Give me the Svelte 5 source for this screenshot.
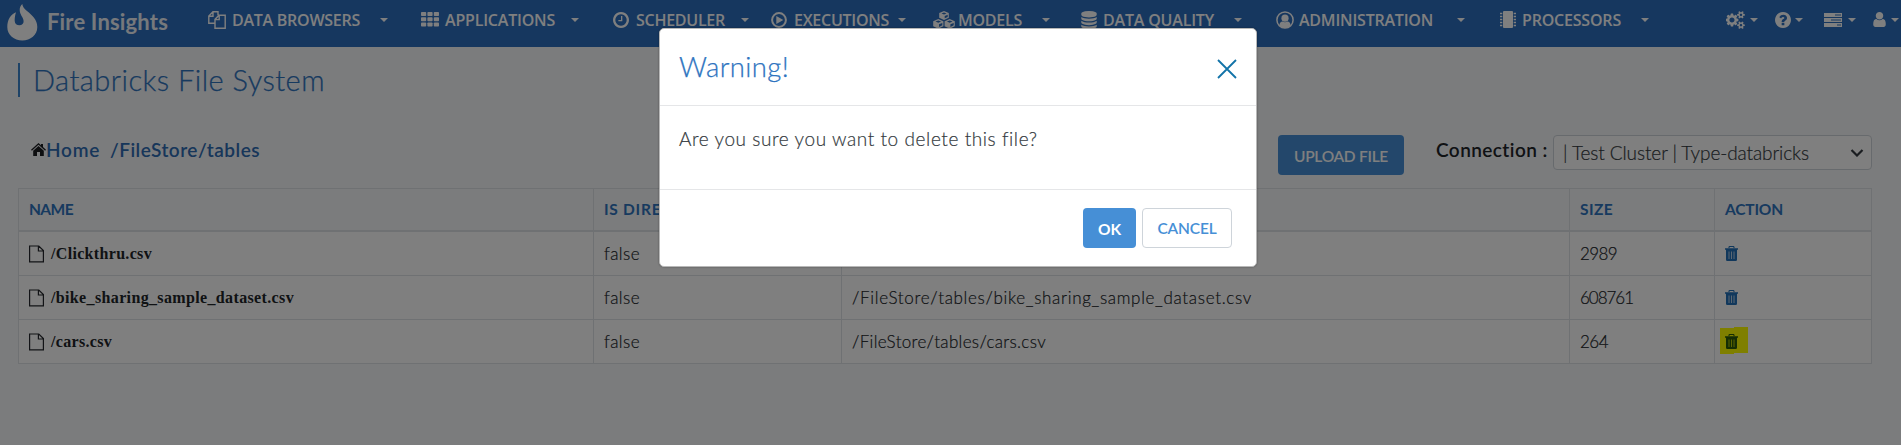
<script>
  const menus = [
    { label: 'DATA BROWSERS', icon: 'files', slot: 24, text: 128, gap: 20, w: 213 },
    { label: 'APPLICATIONS', icon: 'grid', slot: 24, text: 110, gap: 16, w: 192 },
    { label: 'SCHEDULER', icon: 'clock', slot: 23, text: 89, gap: 16, w: 158 },
    { label: 'EXECUTIONS', icon: 'play', slot: 23, text: 95, gap: 9, w: 162 },
    { label: 'MODELS', icon: 'cubes', slot: 25, text: 64, gap: 20, w: 148 },
    { label: 'DATA QUALITY', icon: 'database', slot: 22, text: 111, gap: 20, w: 195 },
    { label: 'ADMINISTRATION', icon: 'usercircle', slot: 23, text: 134, gap: 24, w: 224 },
    { label: 'PROCESSORS', icon: 'chip', slot: 22, text: 99, gap: 20, w: 226 },
    { label: '', icon: 'cogs', slot: 22, text: 0, gap: 2, w: 49 },
    { label: '', icon: 'help', slot: 19, text: 0, gap: 1, w: 49 },
    { label: '', icon: 'tasks', slot: 22, text: 0, gap: 2, w: 49 },
    { label: '', icon: 'user', slot: 17, text: 0, gap: 1, w: 28 }
  ];
  const files = [
    { name: '/Clickthru.csv', nw: 101, path: '/FileStore/tables/Clickthru.csv', pw: 250, size: '2989', sw: 37 },
    { name: '/bike_sharing_sample_dataset.csv', nw: 243, path: '/FileStore/tables/bike_sharing_sample_dataset.csv', pw: 400, size: '608761', sw: 53 },
    { name: '/cars.csv', nw: 61, path: '/FileStore/tables/cars.csv', pw: 194, size: '264', sw: 28, marked: true }
  ];
  // Spreads letters so that a label fills the given width.
  function track(node, width) {
    const natural = node.getBoundingClientRect().width;
    node.style.letterSpacing = `${(width - natural) / node.textContent.length}px`;
  }
</script>

{#snippet icon(name)}
  {#if name === 'files'}
    <svg width="18" height="18" viewBox="0 0 18 18" fill="none" stroke="currentColor" stroke-width="1.4"><path d="M6.5 12.3H.8V5L5 .8h5v3.4M.8 5.2H5V.8M7 17.2h10.2V4.2H11L7 8.4zM7 8.6h4.2V4.2"/></svg>
  {:else if name === 'grid'}
    <svg width="18" height="15" viewBox="0 0 18 15" fill="currentColor">{#each [0, 6.4, 12.8] as x}{#each [0, 5.2, 10.4] as y}<rect {x} {y} width="5.2" height="4.1" rx=".8"/>{/each}{/each}</svg>
  {:else if name === 'clock'}
    <svg width="16" height="16" viewBox="128 128 1536 1536" fill="currentColor"><path d="M1024 544v448q0 14-9 23t-23 9h-320q-14 0-23-9t-9-23v-64q0-14 9-23t23-9h224v-352q0-14 9-23t23-9h64q14 0 23 9t9 23zm416 352q0-148-73-273t-198-198-273-73-273 73-198 198-73 273 73 273 198 198 273 73 273-73 198-198 73-273zm224 0q0 209-103 385.5t-279.5 279.5-385.5 103-385.5-103-279.5-279.5-103-385.5 103-385.5 279.5-279.5 385.5-103 385.5 103 279.5 279.5 103 385.5z"/></svg>
  {:else if name === 'play'}
    <svg width="16" height="16" viewBox="0 0 16 16"><circle cx="8" cy="8" r="6.9" fill="none" stroke="currentColor" stroke-width="2"/><path d="M5.3 4v8l7-4z" fill="currentColor"/></svg>
  {:else if name === 'cubes'}
    <svg width="22" height="18" viewBox="0 0 22 18"><g fill="currentColor"><path d="M11 0l4.8 2v4.8L11 9 6.2 6.8V2z"/><path d="M5.3 8l5.1 2.2v5L5.3 17.7.2 15.2v-5z"/><path d="M16.7 8l5.1 2.2v5l-5.1 2.5-5.100-2.500v-5z"/></g><path d="M8.500 2.500l2.500 1 2.500-1-2.500-1zM11.700 7.300V5L14.700 3.700v2.200zM2.500 10.500l2.800 1.200 2.800-1.200-2.800-1.100zM6 16v-2.700l3.300-1.400v2.400zM13.900 10.500l2.800 1.200 2.800-1.200-2.800-1.100zM17.400 16v-2.700l3.300-1.400v2.400z" fill="#2c6ebe"/></svg>
  {:else if name === 'database'}
    <svg width="16" height="18" viewBox="128 0 1536 1792" fill="currentColor"><path d="M896 768q237 0 443-43t325-127v170q0 69-103 128t-280 93.500-385 34.500-385-34.500-280-93.500-103-128v-170q119 84 325 127t443 43zm0 768q237 0 443-43t325-127v170q0 69-103 128t-280 93.500-385 34.500-385-34.500-280-93.500-103-128v-170q119 84 325 127t443 43zm0-384q237 0 443-43t325-127v170q0 69-103 128t-280 93.500-385 34.500-385-34.500-280-93.500-103-128v-170q119 84 325 127t443 43zm0-1152q208 0 385 34.500t280 93.500 103 128v128q0 69-103 128t-280 93.500-385 34.500-385-34.500-280-93.500-103-128v-128q0-69 103-128t280-93.500 385-34.500z"/></svg>
  {:else if name === 'usercircle'}
    <svg width="18" height="18" viewBox="0 0 18 18"><circle cx="9" cy="9" r="8.100" fill="none" stroke="currentColor" stroke-width="1.500"/><circle cx="9" cy="7.200" r="3.600" fill="currentColor"/><path d="M3.300 14.500c.3-2.600 1.500-4.100 3.200-4.100 1.500 1.100 3.500 1.100 5 0 1.700 0 2.900 1.500 3.200 4.100A8 8 0 0 1 9 17a8 8 0 0 1-5.700-2.500z" fill="currentColor"/></svg>
  {:else if name === 'chip'}
    <svg width="16" height="17" viewBox="0 0 16 17"><rect x="3" y="0" width="10" height="17" rx="1" fill="currentColor"/><path d="M0 2.500h2.300M0 5.500h2.300M0 8.500h2.300M0 11.500h2.300M0 14.500h2.300M13.700 2.500H16M13.700 5.500H16M13.700 8.500H16M13.700 11.500H16M13.700 14.500H16" stroke="currentColor" stroke-width="1.500"/></svg>
  {:else if name === 'cogs'}
    <svg width="19" height="18" viewBox="0 0 1856 1792" fill="currentColor"><path d="M832 896q0-106-75-181t-181-75-181 75-75 181 75 181 181 75 181-75 75-181zm768 512q0-52-38-90t-90-38-90 38-38 90q0 53 37.500 90.500t90.500 37.500 90.500-37.500 37.500-90.500zm0-1024q0-52-38-90t-90-38-90 38-38 90q0 53 37.500 90.500t90.500 37.500 90.500-37.500 37.500-90.500zm-384 421v185q0 10-7 19.500t-16 10.500l-155 24q-11 35-32 76 34 48 90 115 7 11 7 20 0 12-7 19-23 30-82.500 89.500t-78.500 59.500q-11 0-21-7l-115-90q-37 19-77 31-11 108-23 155-7 24-30 24h-186q-11 0-20-7.500t-10-17.500l-23-153q-34-10-75-31l-118 89q-7 7-20 7-11 0-21-8-144-133-144-160 0-9 7-19 10-14 41-53t47-61q-23-44-35-82l-152-24q-10-1-17-9.500t-7-19.500v-185q0-10 7-19.500t16-10.500l155-24q11-35 32-76-34-48-90-115-7-11-7-20 0-12 7-20 22-30 82-89t79-59q11 0 21 7l115 90q34-18 77-32 11-108 23-154 7-24 30-24h186q11 0 20 7.500t10 17.500l23 153q34 10 75 31l118-89q8-7 20-7 11 0 21 8 144 133 144 160 0 8-7 19-12 16-42 54t-45 60q23 48 34 82l152 23q10 2 17 10.500t7 19.500zm640 533v140q0 16-149 31-12 27-30 52 51 113 51 138 0 4-4 7-122 71-124 71-8 0-46-47t-52-68q-20 2-30 2t-30-2q-14 21-52 68t-46 47q-2 0-124-71-4-3-4-7 0-25 51-138-18-25-30-52-149-15-149-31v-140q0-16 149-31 13-29 30-52-51-113-51-138 0-4 4-7 4-2 35-20t59-34 30-16q8 0 46 46.500t52 67.500q20-2 30-2t30 2q51-71 92-112l6-2q4 0 124 70 4 3 4 7 0 25-51 138 17 23 30 52 149 15 149 31zm0-1024v140q0 16-149 31-12 27-30 52 51 113 51 138 0 4-4 7-122 71-124 71-8 0-46-47t-52-68q-20 2-30 2t-30-2q-14 21-52 68t-46 47q-2 0-124-71-4-3-4-7 0-25 51-138-18-25-30-52-149-15-149-31v-140q0-16 149-31 13-29 30-52-51-113-51-138 0-4 4-7 4-2 35-20t59-34 30-16q8 0 46 46.500t52 67.500q20-2 30-2t30 2q51-71 92-112l6-2q4 0 124 70 4 3 4 7 0 25-51 138 17 23 30 52 149 15 149 31z"/></svg>
  {:else if name === 'help'}
    <svg width="16" height="16" viewBox="128 128 1536 1536" fill="currentColor"><path d="M1024 1376v-192q0-14-9-23t-23-9h-192q-14 0-23 9t-9 23v192q0 14 9 23t23 9h192q14 0 23-9t9-23zm256-672q0-88-55.500-163t-138.500-116-170-41q-243 0-371 213-15 24 8 42l132 100q7 6 19 6 16 0 25-12 53-68 86-92 34-24 86-24 48 0 85.500 26t37.500 59q0 38-20 61t-68 45q-63 28-115.500 86.500t-52.500 125.500v36q0 14 9 23t23 9h192q14 0 23-9t9-23q0-19 21.500-49.500t54.500-49.500q32-18 49-28.500t46-35 44.500-48 28-60.500 12.500-81zm384 192q0 209-103 385.500t-279.500 279.500-385.500 103-385.500-103-279.500-279.500-103-385.500 103-385.500 279.500-279.500 385.500-103 385.500 103 279.500 279.500 103 385.500z"/></svg>
  {:else if name === 'tasks'}
    <svg width="18" height="14" viewBox="0 0 18 14"><path d="M0 0h18v4H0zM0 5h18v4H0zM0 10h18v4H0z" fill="currentColor"/><path d="M11 1.500h6v1h-6zM7 6.500h10v1H7zM13 11.500h4v1h-4z" fill="#2c6ebe"/></svg>
  {:else if name === 'user'}
    <svg width="13" height="15" viewBox="256 128 1280 1536" fill="currentColor"><path d="M1536 1399q0 109-62.500 187t-150.500 78h-854q-88 0-150.500-78t-62.500-187q0-85 8.500-160.500t31.500-152 58.500-131 94-89 134.500-34.500q131 128 313 128t313-128q76 0 134.500 34.500t94 89 58.500 131 31.500 152 8.500 160.500zm-256-887q0 159-112.500 271.500t-271.500 112.500-271.500-112.500-112.500-271.500 112.500-271.500 271.500-112.500 271.500 112.500 112.500 271.500z"/></svg>
  {/if}
{/snippet}

<div class="page">
  <header>
    <div class="brand">
      <svg width="31" height="37" viewBox="0 0 31 37"><path d="M15.300 0C15.500 2.500 17 4.500 20 7c5 4.300 10.300 8.500 10.300 16C30.300 31 23.500 36.500 15.300 36.500S.3 31 .3 23C.3 16 3.500 10.500 9 8.300 8 11.500 7.600 14.500 7.700 17c.2 3 2.200 4.200 4.600 4.200 2.800 0 4.500-1.700 4.300-4.200-.3-4-3.800-6-3.900-11 0-2.500.8-4.500 2.600-6z" fill="#fff"/></svg>
      <b><span use:track={121}>Fire Insights</span></b>
    </div>
    <nav>
      {#each menus as m}
        <div class="menu" style:width="{m.w}px">
          <i style:width="{m.slot}px">{@render icon(m.icon)}</i>
          {#if m.label}<span use:track={m.text}>{m.label}</span>{/if}
          <em style:margin-left="{m.gap}px"></em>
        </div>
      {/each}
    </nav>
  </header>

  <main>
    <h1><span use:track={292}>Databricks File System</span></h1>
    <div class="tools">
      <div class="crumbs">
        <svg width="15" height="13" viewBox="0 0 15 13"><path d="M7.500 0L10 2.200V1h2v3L15 6.800l-.9.9L7.500 1.800.9 7.700 0 6.800zM7.500 3l5.300 4.700V13H9V9H6v4H2.200V7.700z" fill="#1c1e22"/></svg>
        <span class="home" use:track={54}>Home</span>
        <span use:track={150}>/FileStore/tables</span>
      </div>
      <button class="upload"><span use:track={94}>UPLOAD FILE</span></button>
      <label><span use:track={112}>Connection :</span></label>
      <div class="select">
        <span use:track={246}>| Test Cluster | Type-databricks</span>
        <svg width="14" height="8" viewBox="0 0 14 8"><path d="M1.500 1L7 6.500 12.500 1" fill="none" stroke="#343a40" stroke-width="2.200"/></svg>
      </div>
    </div>

    <div class="table">
      <div class="row head">
        <div><span use:track={44}>NAME</span></div>
        <div><span use:track={112}>IS DIRECTORY</span></div>
        <div><span>PATH</span></div>
        <div><span use:track={33}>SIZE</span></div>
        <div><span use:track={58}>ACTION</span></div>
      </div>
      {#each files as f}
        <div class="row">
          <div class="name">
            <svg width="15" height="18" viewBox="0 0 15 18" fill="none" stroke="#25272c" stroke-width="1.200"><path d="M.6 1h9.200l4.600 4.600V16.800H.6zM9.400 1v5h5"/></svg>
            <b use:track={f.nw}>{f.name}</b>
          </div>
          <div><span use:track={36}>false</span></div>
          <div><span use:track={f.pw}>{f.path}</span></div>
          <div><span use:track={f.sw}>{f.size}</span></div>
          <div class="action" class:marked={f.marked}>
            <svg width="13" height="15" viewBox="0 0 13 15"><path d="M4 2V1.200Q4 .5 4.800.5h3.400Q9 .5 9 1.200V2" fill="none" stroke="currentColor" stroke-width="1.100"/><path d="M0 2.200h13v1.600H0zM1 3.800h11v9.900q0 1.300-1.300 1.300H2.300Q1 15 1 13.700z" fill="currentColor"/><path d="M4 5.500v7.500M6.500 5.500v7.500M9 5.500v7.500" stroke={f.marked ? '#b8c800' : '#b9cfe4'} stroke-width="1"/></svg>
          </div>
        </div>
      {/each}
    </div>
  </main>

  <div class="backdrop"></div>

  <section class="modal">
    <div class="mhead">
      <h2><span use:track={110}>Warning!</span></h2>
      <svg width="20" height="20" viewBox="0 0 20 20"><path d="M1 1l18 18M19 1L1 19" stroke="#1273a8" stroke-width="1.800"/></svg>
    </div>
    <div class="mbody"><span use:track={358}>Are you sure you want to delete this file?</span></div>
    <div class="mfoot">
      <button class="ok"><span use:track={23}>OK</span></button>
      <button class="cancel"><span use:track={59}>CANCEL</span></button>
    </div>
  </section>
</div>

<style>
  :global(body) { overflow: hidden; }
  .page { position: relative; height: 445px; width: 1901px; overflow: hidden; background: #f7f8fb; font-family: Lato, sans-serif; font-weight: 300; color: #212529; box-sizing: border-box; }
  .page * { box-sizing: border-box; }
  span, b { white-space: nowrap; }
  svg { display: block; flex: none; }
  header { height: 47px; background: #2c6ebe; display: flex; color: #fff; }
  .brand { width: 208px; display: flex; padding: 4px 0 0 7px; gap: 9px; font-size: 22px; line-height: 36px; }
  .brand b { font-weight: 700; color: #eef2f8; }
  nav { display: flex; height: 40px; }
  .menu { display: flex; align-items: center; flex: none; height: 39px; font: 600 16px/39px "Open Sans", sans-serif; }
  .menu i { flex: none; }
  .menu span { padding-top: 1px; }
  .menu em { border: 4.500px solid transparent; border-top: 4px solid #fff; border-bottom: 0; }
  main { padding: 16px 29px 0 18px; }
  h1 { margin: 0; height: 34px; border-left: 2px solid #3c86cf; padding-left: 13px; font-weight: 300; font-size: 29px; line-height: 34px; color: #2e74bf; -webkit-text-stroke: .25px; }
  .tools { display: flex; align-items: flex-start; height: 91px; padding-top: 38px; }
  .crumbs { display: flex; align-items: center; flex: 1; padding-left: 13px; height: 28px; font-size: 19px; font-weight: 600; color: #2e6db4; }
  .crumbs svg { margin: 1px 0 0; }
  .crumbs .home { margin-right: 10px; }
  button { font: 600 15.500px/38px Lato, sans-serif; height: 40px; padding: 1px 0 0; border: 0; border-radius: 4px; text-align: center; flex: none; }
  .upload { width: 126px; background: #468fd6; color: #fff; }
  label { width: 149px; padding-left: 32px; font-size: 19px; line-height: 29px; font-weight: 600; }
  .select { width: 319px; height: 35px; border: 1px solid #ced4da; border-radius: 4px; background: #fff; display: flex; justify-content: space-between; align-items: center; padding: 0 7px 0 9px; font-size: 19px; color: #343a40; -webkit-text-stroke: .2px; }
  .table { border: 1px solid #dee2e6; border-width: 1px 0 0 1px; width: 1854px; }
  .row { display: grid; grid-template-columns: 575px 248px 728px 145px 157px; height: 44px; background: #fff; font-size: 17px; }
  .row > div { border: 1px solid #dee2e6; border-width: 0 1px 1px 0; padding: 0 0 1px 10px; display: flex; align-items: center; }
  .row:not(.head) span { -webkit-text-stroke: .2px; }
  .row.head { height: 43px; background: #f7f8fb; font-size: 15.500px; font-weight: 700; color: #2e74bf; }
  .head > div { border-bottom-width: 2px; }
  .row > .name { padding: 1px 0 0 10px; gap: 7px; font: 700 16px "Liberation Serif", serif; }
  .name svg { margin-top: -1px; }
  .row > .action { color: #2370b8; }
  .row > .marked { color: #2b5a08; background: linear-gradient(#ff0, #ff0) 5px 8px / 14px 26px no-repeat, linear-gradient(#ff0, #ff0) 19px 7px / 14px 26px no-repeat; }
  .backdrop { position: absolute; inset: 0; background: rgba(0, 0, 0, .5); }
  .modal { position: absolute; left: 659px; top: 28px; width: 598px; height: 239px; background: #fff; border: 1px solid #b8b8b8; border-radius: 5px; box-shadow: 0 0 2px rgba(0, 0, 0, .4); }
  .mhead { height: 77px; border-bottom: 1px solid #e5e6e8; padding: 20px 19px 0; display: flex; justify-content: space-between; }
  h2 { margin: 0; font-weight: 300; font-size: 27.500px; line-height: 36px; color: #2e74bf; -webkit-text-stroke: .25px; }
  .mhead svg { margin-top: 10px; }
  .mbody { height: 84px; border-bottom: 1px solid #e5e6e8; padding: 21px 19px; font-size: 19px; line-height: 24px; color: #343a40; -webkit-text-stroke: .2px; }
  .mfoot { padding: 18px 24px 0; display: flex; justify-content: flex-end; gap: 6px; }
  .ok { width: 53px; background: #468fd6; color: #fff; font-weight: 700; }
  .cancel { width: 90px; background: #fff; border: 1px solid #ced4da; color: #468fd6; padding: 0; }
</style>
